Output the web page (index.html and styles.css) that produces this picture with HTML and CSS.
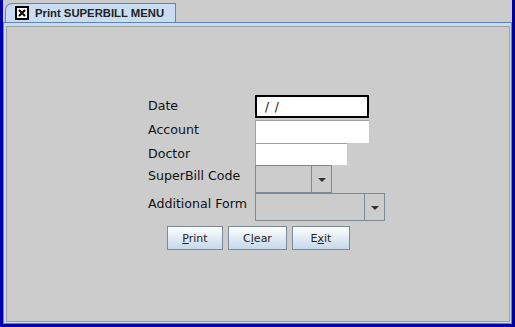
FILE: index.html
```html
<!DOCTYPE html>
<html lang="en">
<head>
    <meta charset="UTF-8">
    <title>Print SUPERBILL MENU</title>
    <link rel="stylesheet" href="styles.css">
</head>
<body>
    <div class="frame">
        <div class="tab-row">
            <div class="tab">
                <svg class="close-icon" width="14" height="14" viewBox="0 0 14 14">
                    <rect x="1" y="1" width="12" height="12" fill="#ffffff" stroke="#000" stroke-width="2" />
                    <path d="M4 4 L10 10 M10 4 L4 10" stroke="#000" stroke-width="2" />
                </svg>
                <span class="tab-title">Print SUPERBILL MENU</span>
            </div>
        </div>
        <div class="tab-body">
            <div class="panel">
                <div class="form">
                    <div class="label">Date</div>
                    <div class="field date-field"><span class="date-value">/ /</span></div>

                    <div class="label">Account</div>
                    <div class="field text-field account"></div>

                    <div class="label">Doctor</div>
                    <div class="field text-field doctor"></div>

                    <div class="label">SuperBill Code</div>
                    <div class="field combo code-combo">
                        <div class="combo-value"></div>
                        <div class="combo-arrow"><span class="triangle"></span></div>
                    </div>

                    <div class="label">Additional Form</div>
                    <div class="field combo form-combo">
                        <div class="combo-value"></div>
                        <div class="combo-arrow"><span class="triangle"></span></div>
                    </div>
                </div>
                <div class="actions">
                    <button class="btn btn-print"><u>P</u>rint</button>
                    <button class="btn btn-clear">C<u>l</u>ear</button>
                    <button class="btn btn-exit">E<u>x</u>it</button>
                </div>
            </div>
        </div>
    </div>
</body>
</html>
```

FILE: styles.css
```css
html, body {
    margin: 0;
    padding: 0;
}
body {
    width: 515px;
    height: 327px;
    background-color: #0000a0;
    font-family: "DejaVu Sans", "Liberation Sans", sans-serif;
    overflow: hidden;
}
.frame {
    margin: 0 3px 0 3px;
    height: 324px;
    background-color: #cccccc;
    display: flex;
    flex-direction: column;
}
.tab-row {
    height: 19px;
    padding: 3px 0 0 2px;
    border-bottom: 1px solid #6382bf;
    display: flex;
}
.tab {
    width: 171px;
    height: 19px;
    margin-bottom: -1px;
    background-color: #c8ddf2;
    border: 1px solid #6382bf;
    border-bottom: none;
    border-top-left-radius: 7px;
    display: flex;
    align-items: center;
    padding-left: 9px;
    box-sizing: border-box;
}
.close-icon {
    flex-shrink: 0;
    margin-right: 6px;
}
.tab-title {
    font-family: "Liberation Sans", Arial, sans-serif;
    font-size: 11.3px;
    font-weight: bold;
    color: #222;
    white-space: nowrap;
}
.tab-body {
    flex-grow: 1;
    background-color: #c8ddf2;
    border: 1px solid #6382bf;
    border-top: none;
    padding: 3px 1px 1px 2px;
    display: flex;
}
.panel {
    flex-grow: 1;
    background-color: #cccccc;
    border: 1px solid #a0a0a0;
    padding: 68px 0 0 141px;
}
.form {
    display: grid;
    grid-template-columns: 107px auto;
    grid-template-rows: 24px 24px 22px 28px 28px;
}
.label {
    font-size: 12.6px;
    line-height: 20px;
    padding-top: 1px;
    color: #111;
    white-space: nowrap;
}
.field {
    box-sizing: border-box;
}
.date-field {
    width: 114px;
    height: 23px;
    border: 2px solid #000;
    background-color: #fff;
    display: flex;
    align-items: center;
    padding-left: 8px;
}
.date-value {
    font-family: "DejaVu Sans", sans-serif;
    font-size: 12px;
    white-space: pre;
    word-spacing: 2px;
    color: #111;
}
.text-field {
    height: 23px;
    background-color: #fff;
    border-top: 1px solid #a0a0a0;
    border-left: 1px solid #a0a0a0;
}
.account {
    width: 114px;
    margin-top: 1px;
}
.doctor {
    width: 92px;
    height: 22px;
}
.combo {
    height: 28px;
    border: 1px solid #7a8a99;
    display: flex;
    background-color: #cccccc;
}
.code-combo {
    width: 77px;
}
.form-combo {
    width: 130px;
}
.combo-value {
    flex-grow: 1;
}
.combo-arrow {
    width: 19px;
    border-left: 1px solid #7a8a99;
    display: flex;
    align-items: center;
    justify-content: center;
}
.triangle {
    width: 0;
    height: 0;
    border-left: 4px solid transparent;
    border-right: 4px solid transparent;
    border-top: 4px solid #333;
    margin-top: 2px;
}
.actions {
    display: flex;
    gap: 5px;
    margin: 5px 0 0 19px;
}
.btn {
    height: 24px;
    padding: 0;
    border: 1px solid #7a8a99;
    background: linear-gradient(#ffffff 0%, #e6eef7 40%, #c6d8ea 100%);
    font-family: "DejaVu Sans", sans-serif;
    font-size: 11px;
    color: #222;
}
.btn-print {
    width: 56px;
}
.btn-clear {
    width: 59px;
}
.btn-exit {
    width: 58px;
}
```
